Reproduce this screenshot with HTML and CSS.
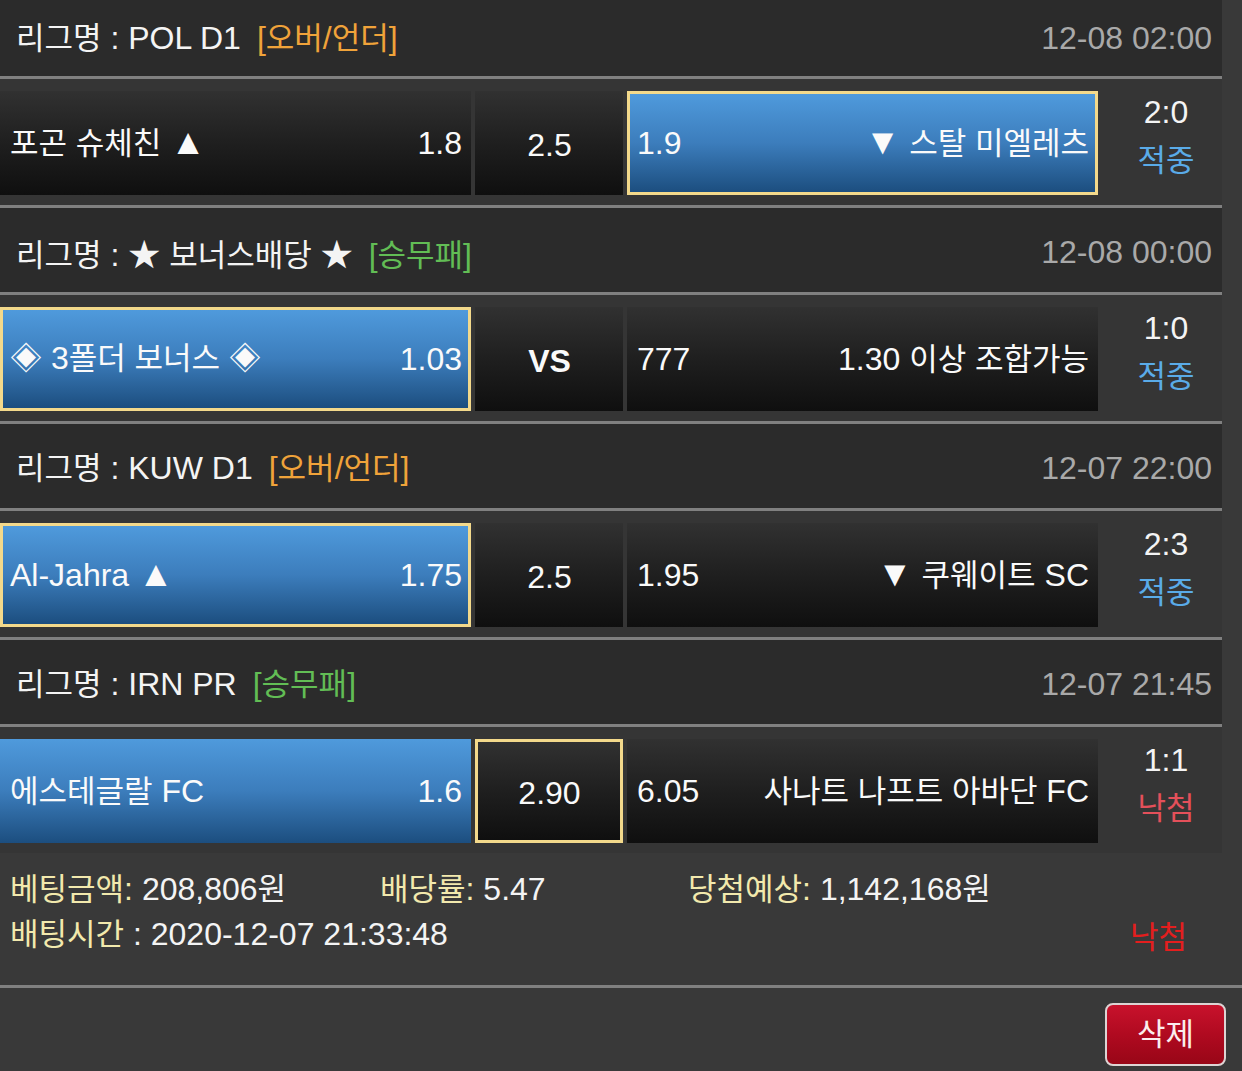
FILE: index.html
```html
<!DOCTYPE html>
<html lang="ko">
<head>
<meta charset="utf-8">
<title>배팅내역</title>
<link rel="stylesheet" href="styles.css">
</head>
<body>
<div class="board">
  <div class="league first">
    <div class="lname"><span class="ko">리그명</span> : POL D1<span class="tag ou">[<span class="ko">오버</span>/<span class="ko">언더</span>]</span></div>
    <div class="date">12-08 02:00</div>
  </div>
  <div class="match">
    <div class="cell"><span class="team"><span class="ko">포곤 슈체친</span> <span class="tri">▲</span></span><span class="odd">1.8</span></div>
    <div class="cell mid">2.5</div>
    <div class="cell blue sel"><span class="odd">1.9</span><span class="team"><span class="tri">▼</span> <span class="ko">스탈 미엘레츠</span></span></div>
    <div class="score"><div>2:0</div><div class="hit ko">적중</div></div>
  </div>

  <div class="league">
    <div class="lname"><span class="ko">리그명</span> : ★ <span class="ko">보너스배당</span> ★<span class="tag wdl">[<span class="ko">승무패</span>]</span></div>
    <div class="date">12-08 00:00</div>
  </div>
  <div class="match">
    <div class="cell blue sel"><span class="team">◈ 3<span class="ko">폴더 보너스</span> ◈</span><span class="odd">1.03</span></div>
    <div class="cell mid vs">VS</div>
    <div class="cell"><span class="odd">777</span><span class="team">1.30 <span class="ko">이상 조합가능</span></span></div>
    <div class="score"><div>1:0</div><div class="hit ko">적중</div></div>
  </div>

  <div class="league">
    <div class="lname"><span class="ko">리그명</span> : KUW D1<span class="tag ou">[<span class="ko">오버</span>/<span class="ko">언더</span>]</span></div>
    <div class="date">12-07 22:00</div>
  </div>
  <div class="match">
    <div class="cell blue sel"><span class="team">Al-Jahra <span class="tri">▲</span></span><span class="odd">1.75</span></div>
    <div class="cell mid">2.5</div>
    <div class="cell"><span class="odd">1.95</span><span class="team"><span class="tri">▼</span> <span class="ko">쿠웨이트</span> SC</span></div>
    <div class="score"><div>2:3</div><div class="hit ko">적중</div></div>
  </div>

  <div class="league">
    <div class="lname"><span class="ko">리그명</span> : IRN PR<span class="tag wdl">[<span class="ko">승무패</span>]</span></div>
    <div class="date">12-07 21:45</div>
  </div>
  <div class="match last">
    <div class="cell blue"><span class="team"><span class="ko">에스테글랄</span> FC</span><span class="odd">1.6</span></div>
    <div class="cell mid sel">2.90</div>
    <div class="cell"><span class="odd">6.05</span><span class="team"><span class="ko">사나트 나프트 아바단</span> FC</span></div>
    <div class="score"><div>1:1</div><div class="miss ko">낙첨</div></div>
  </div>
</div>

<div class="summary">
  <div class="sum-row">
    <div><span class="lbl"><span class="ko">베팅금액</span>:</span> 208,806<span class="ko">원</span></div>
    <div><span class="lbl"><span class="ko">배당률</span>:</span> 5.47</div>
    <div><span class="lbl"><span class="ko">당첨예상</span>:</span> 1,142,168<span class="ko">원</span></div>
  </div>
  <div class="sum-row2">
    <div><span class="lbl ko">배팅시간</span> : 2020-12-07 21:33:48</div>
    <div class="lost ko">낙첨</div>
  </div>
</div>

<div class="actions">
  <button class="del" type="button"><span class="ko">삭제</span></button>
</div>
</body>
</html>
```

FILE: styles.css
```css
body {
  margin: 0;
  background: #393939;
  font-family: "Liberation Sans", "Noto Sans CJK KR", sans-serif;
  font-size: 32px;
  color: #f4f4f4;
}

.ko {
  font-family: "Noto Sans CJK KR", "Liberation Sans", sans-serif;
  font-size: 31px;
  letter-spacing: 0;
  line-height: 1;
}

.tri {
  font-size: 36px;
  line-height: 1;
}

.board {
  width: 1222px;
}

.league {
  box-sizing: border-box;
  height: 87px;
  padding: 4px 10px 0 16px;
  background: #2b2b2b;
  border-bottom: 3px solid #808080;
  display: flex;
  align-items: center;
  justify-content: space-between;
  white-space: nowrap;
}

.league.first {
  height: 79px;
  padding-top: 0;
}

.tag {
  margin-left: 16px;
}

.tag.ou {
  color: #f0a33a;
}

.tag.wdl {
  color: #62bd55;
}

.date {
  color: #a9a9a9;
}

.match {
  box-sizing: border-box;
  height: 129px;
  padding: 12px 0 10px;
  background: #353535;
  border-bottom: 3px solid #808080;
  display: grid;
  grid-template-columns: 471px 148px 471px 1fr;
  column-gap: 4px;
}

.match.last {
  height: 126px;
  border-bottom: none;
}

.cell {
  box-sizing: border-box;
  padding: 0 9px 0 10px;
  background: linear-gradient(to bottom, #313131 0%, #1f1f1f 50%, #0f0f0f 100%);
  display: flex;
  align-items: center;
  justify-content: space-between;
  white-space: nowrap;
  color: #fafafa;
}

.cell.blue {
  background: linear-gradient(to bottom, #4f9adc 0%, #3c7dbc 50%, #1c4e7f 100%);
}

.cell.sel {
  border: 3px solid #f3d98b;
  padding: 0 6px 0 7px;
}

.cell.mid {
  justify-content: center;
  padding-top: 5px;
}

.cell.vs {
  font-weight: bold;
}

.score {
  padding-left: 8px;
  margin-top: -2px;
  display: flex;
  flex-direction: column;
  align-items: center;
  line-height: 46px;
}

.score .ko {
  line-height: 46px;
}

.hit {
  color: #5aabe8;
}

.miss {
  color: #e4505a;
}

.summary {
  padding: 14px 55px 28px 10px;
  border-bottom: 3px solid #808080;
  line-height: 45px;
  white-space: nowrap;
}

.sum-row {
  display: grid;
  grid-template-columns: 370px 308px 1fr;
}

.sum-row2 {
  display: flex;
  justify-content: space-between;
  align-items: center;
}

.lbl {
  color: #f2e9ad;
}

.lost {
  color: #e41e1e;
  line-height: 45px;
}

.actions {
  display: flex;
  justify-content: flex-end;
  padding: 15px 16px 0 0;
}

.del {
  width: 121px;
  height: 63px;
  padding: 0;
  border: 2px solid #ddd4d4;
  border-radius: 8px;
  background: linear-gradient(to bottom, #c8122c 0%, #b00a20 50%, #980617 100%);
  color: #fbeeee;
  font-family: inherit;
  font-size: 32px;
  cursor: pointer;
}
```
